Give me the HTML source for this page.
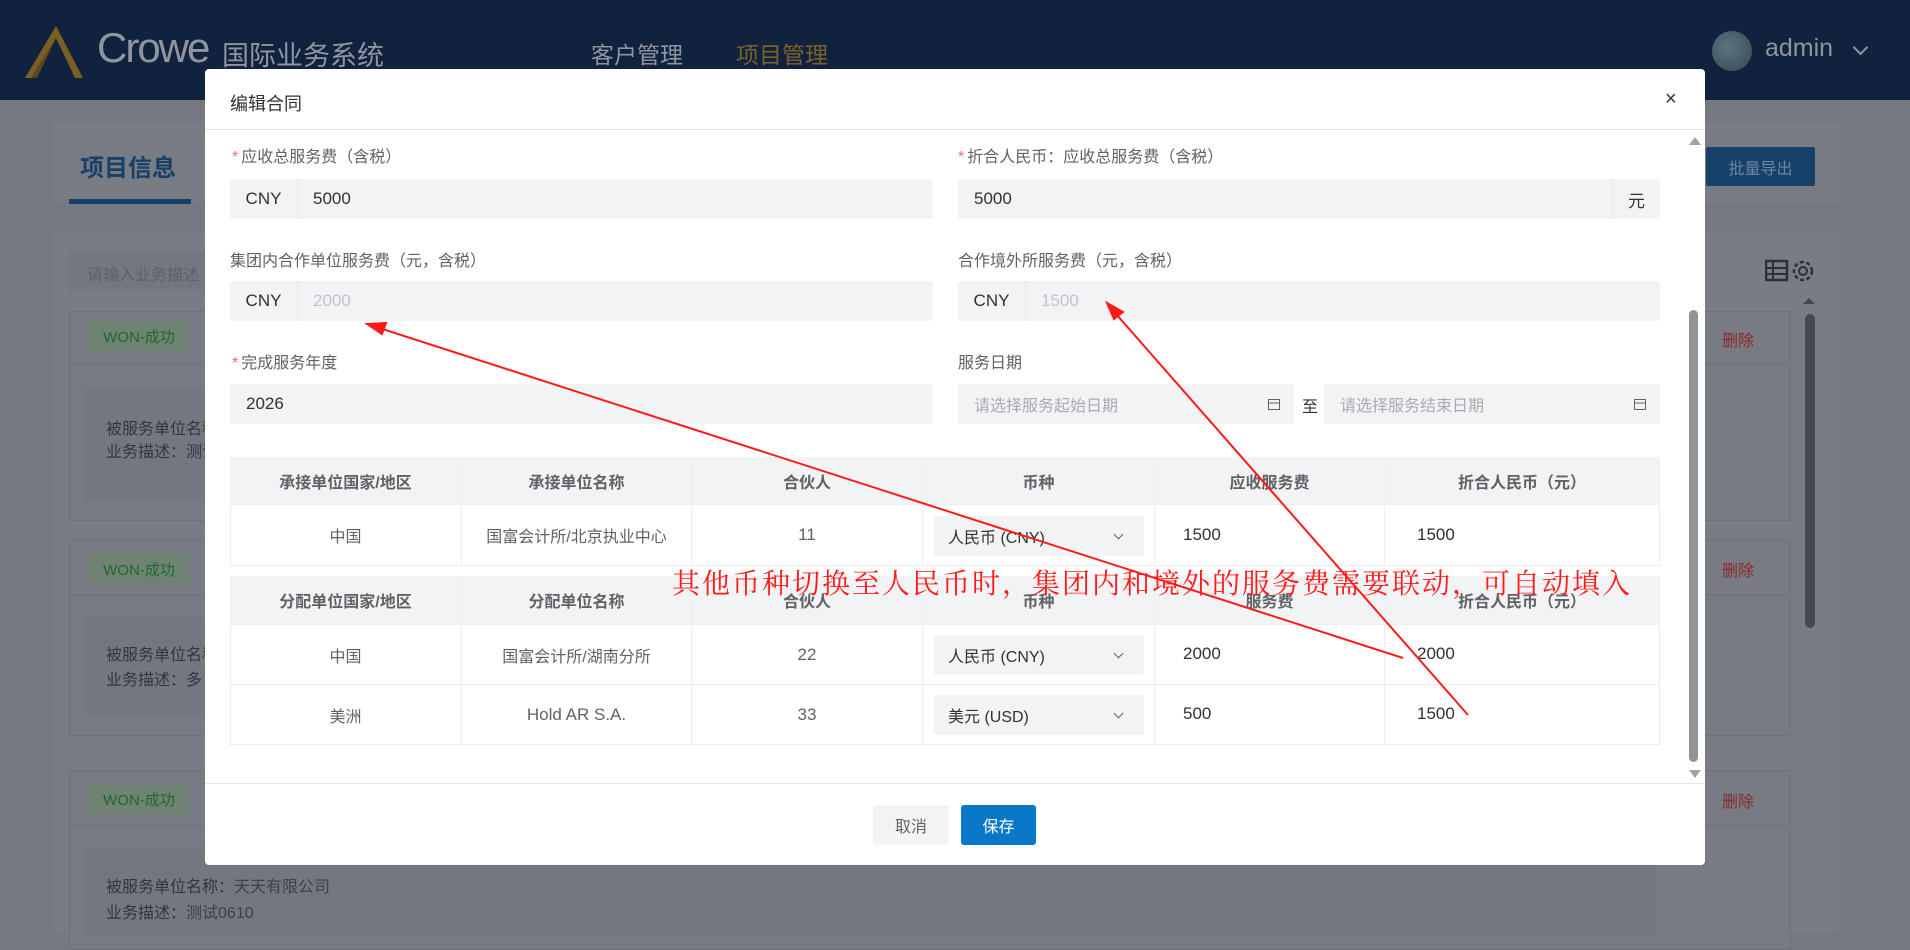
<!DOCTYPE html>
<html><head><meta charset="utf-8">
<style>
*{box-sizing:border-box;margin:0;padding:0}
body{width:1910px;height:933px;overflow:hidden;background:#75787f;font-family:"Liberation Sans","Noto Sans CJK SC",sans-serif;position:relative}
.a{position:absolute}
.hdr{left:0;top:0;width:1910px;height:100px;background:#11223f}
.lbl{font-size:16px;color:#606266}
.lbl b{color:#f56c6c;font-weight:normal;margin-right:3px}
.inp{background:#f2f3f5;border-radius:3px;height:40px;font-size:17px;color:#303133;display:flex;align-items:center}
.pre{width:68px;height:40px;display:flex;align-items:center;justify-content:center;border-right:1px solid #e4e6ea;color:#303133}
.th{background:#f2f3f5;font-weight:bold;color:#606266;font-size:16px}
.cell{position:absolute;display:flex;align-items:center;justify-content:center;font-size:16px;color:#606266;border-right:1px solid #ebeef5;border-bottom:1px solid #ebeef5}
.sel{position:absolute;left:934px;width:210px;height:40px;background:#f2f3f5;border-radius:3px;font-size:16px;color:#303133;display:flex;align-items:center;padding-left:14px}
.sel:after{content:"";position:absolute;right:22px;top:15px;width:6px;height:6px;border-right:1.3px solid #606266;border-bottom:1.3px solid #606266;transform:rotate(45deg)}
.num{position:absolute;font-size:17px;color:#303133}
.card{background:#787b82;border:1px solid #6e7178}
.tag{background:#6f8274;color:#1d6a2a;font-size:15px;display:flex;align-items:center;justify-content:center;border-radius:2px}
.del{color:#8a2a2a;font-size:16px}
.btxt{color:#303640;font-size:16px}
</style></head><body>
<div class="a hdr"></div>
<svg class="a" style="left:25px;top:24px" width="60" height="54" viewBox="0 0 60 54"><path d="M31 2 L58 54 L50 54 L31 14 L8 54 L0 54 Z" fill="#7a5f22"/><path d="M31 14 L12 54 L6 54 Z" fill="#5a4620"/></svg>
<div class="a" style="left:97px;top:24px;font-size:42px;color:#8e959e;letter-spacing:-2px">Crowe</div>
<div class="a" style="left:222px;top:34px;font-size:27px;color:#8e959e">国际业务系统</div>
<div class="a" style="left:591px;top:36px;font-size:23px;color:#8e959e">客户管理</div>
<div class="a" style="left:736px;top:36px;font-size:23px;color:#7a6227">项目管理</div>
<div class="a" style="left:1712px;top:31px;width:40px;height:40px;border-radius:50%;background:radial-gradient(circle at 40% 40%,#5d7580,#33474f)"></div>
<div class="a" style="left:1765px;top:34px;font-size:25px;color:#8e959e">admin</div>
<div class="a" style="left:1855px;top:42px;width:11px;height:11px;border-right:2px solid #8e959e;border-bottom:2px solid #8e959e;transform:rotate(45deg)"></div>

<div class="a" style="left:51px;top:122px;width:1788px;height:80px;background:#797c83"></div>
<div class="a" style="left:80px;top:148px;font-size:24px;font-weight:bold;color:#17406a">项目信息</div>
<div class="a" style="left:69px;top:199px;width:122px;height:5px;background:#14406a"></div>
<div class="a" style="left:1706px;top:147px;width:109px;height:39px;background:#15416b;border-radius:2px;color:#6c86a0;font-size:16px;display:flex;align-items:center;justify-content:center">批量导出</div>
<div class="a" style="left:51px;top:232px;width:1788px;height:701px;background:#797c83"></div>
<div class="a" style="left:69px;top:251px;width:150px;height:39px;background:#74777e;color:#5c6068;font-size:16px;padding:10px 18px">请输入业务描述</div>
<svg class="a" style="left:1765px;top:259px" width="50" height="26"><rect x="1" y="2" width="21" height="19" fill="none" stroke="#2d3038" stroke-width="2.5"/><path d="M1 9h21M1 15h21M8 2v19" stroke="#2d3038" stroke-width="2"/><circle cx="38" cy="12" r="4" fill="none" stroke="#2d3038" stroke-width="2"/><circle cx="38" cy="12" r="9" fill="none" stroke="#2d3038" stroke-width="2.5" stroke-dasharray="4 2.5"/></svg>
<div class="a" style="left:1805px;top:314px;width:10px;height:314px;border-radius:5px;background:#45484e"></div>
<div class="a" style="left:1803px;top:298px;width:0;height:0;border:6px solid transparent;border-bottom-color:#45484e;border-top:0"></div>

<div class="a card" style="left:69px;top:311px;width:1722px;height:210px"></div>
<div class="a" style="left:69px;top:364px;width:1722px;height:1px;background:#6e7178"></div>
<div class="a tag" style="left:89px;top:320px;width:100px;height:32px">WON-成功</div>
<div class="a" style="left:85px;top:387px;width:1570px;height:115px;background:#74777e"></div>
<div class="a btxt" style="left:106px;top:415px">被服务单位名称：</div>
<div class="a btxt" style="left:106px;top:438px">业务描述：测试</div>
<div class="a del" style="left:1722px;top:327px">删除</div>

<div class="a card" style="left:69px;top:540px;width:1722px;height:196px"></div>
<div class="a" style="left:69px;top:594px;width:1722px;height:1px;background:#6e7178"></div>
<div class="a tag" style="left:89px;top:553px;width:100px;height:32px">WON-成功</div>
<div class="a" style="left:85px;top:617px;width:1570px;height:97px;background:#74777e"></div>
<div class="a btxt" style="left:106px;top:641px">被服务单位名称：</div>
<div class="a btxt" style="left:106px;top:666px">业务描述：多</div>
<div class="a del" style="left:1722px;top:557px">删除</div>

<div class="a card" style="left:69px;top:770px;width:1722px;height:180px"></div>
<div class="a" style="left:69px;top:825px;width:1722px;height:1px;background:#6e7178"></div>
<div class="a tag" style="left:89px;top:783px;width:100px;height:32px">WON-成功</div>
<div class="a" style="left:85px;top:847px;width:1570px;height:90px;background:#74777e"></div>
<div class="a btxt" style="left:106px;top:873px">被服务单位名称：<span style="color:#3c4049">天天有限公司</span></div>
<div class="a btxt" style="left:106px;top:899px">业务描述：<span style="color:#3c4049">测试0610</span></div>
<div class="a del" style="left:1722px;top:788px">删除</div>

<div class="a" style="left:205px;top:69px;width:1500px;height:796px;background:#fff;border-radius:4px"></div>
<div class="a" style="left:230px;top:90px;font-size:18px;color:#303133">编辑合同</div>
<div class="a" style="left:1665px;top:88px;font-size:20px;color:#303133">×</div>
<div class="a" style="left:205px;top:129px;width:1500px;height:1px;background:#e4e7ed"></div>
<div class="a" style="left:1689px;top:137px;width:0;height:0;border:6px solid transparent;border-bottom:8px solid #a0a2a6;border-top:0"></div>
<div class="a" style="left:1689px;top:310px;width:9px;height:452px;border-radius:5px;background:#909398"></div>
<div class="a" style="left:1689px;top:770px;width:0;height:0;border:6px solid transparent;border-top:8px solid #a0a2a6;border-bottom:0"></div>

<div class="a lbl" style="left:232px;top:143px"><b>*</b>应收总服务费（含税）</div>
<div class="a inp" style="left:230px;top:179px;width:703px"><div class="pre">CNY</div><span style="margin-left:15px">5000</span></div>
<div class="a lbl" style="left:958px;top:143px"><b>*</b>折合人民币：应收总服务费（含税）</div>
<div class="a inp" style="left:958px;top:179px;width:702px;padding-left:16px">5000<div style="position:absolute;right:0;top:0;width:48px;height:40px;border-left:1px solid #e4e6ea;display:flex;align-items:center;justify-content:center">元</div></div>

<div class="a lbl" style="left:230px;top:247px">集团内合作单位服务费（元，含税）</div>
<div class="a inp" style="left:230px;top:281px;width:703px"><div class="pre">CNY</div><span style="margin-left:15px;color:#c0c4cc">2000</span></div>
<div class="a lbl" style="left:958px;top:247px">合作境外所服务费（元，含税）</div>
<div class="a inp" style="left:958px;top:281px;width:702px"><div class="pre">CNY</div><span style="margin-left:15px;color:#c0c4cc">1500</span></div>

<div class="a lbl" style="left:232px;top:349px"><b>*</b>完成服务年度</div>
<div class="a inp" style="left:230px;top:384px;width:703px;padding-left:16px">2026</div>
<div class="a lbl" style="left:958px;top:349px">服务日期</div>
<div class="a inp" style="left:958px;top:384px;width:336px;padding-left:16px;color:#a8abb2;font-size:16px">请选择服务起始日期<svg style="position:absolute;right:14px;top:14px" width="12" height="12"><rect x="0.5" y="1.5" width="11" height="10" fill="none" stroke="#606266"/><path d="M0.5 5h11" stroke="#606266"/></svg></div>
<div class="a" style="left:1302px;top:393px;font-size:16px;color:#303133">至</div>
<div class="a inp" style="left:1324px;top:384px;width:336px;padding-left:16px;color:#a8abb2;font-size:16px">请选择服务结束日期<svg style="position:absolute;right:14px;top:14px" width="12" height="12"><rect x="0.5" y="1.5" width="11" height="10" fill="none" stroke="#606266"/><path d="M0.5 5h11" stroke="#606266"/></svg></div>

<div class="cell th" style="left:230px;top:457px;width:232px;height:48px">承接单位国家/地区</div>
<div class="cell th" style="left:462px;top:457px;width:230px;height:48px">承接单位名称</div>
<div class="cell th" style="left:692px;top:457px;width:231px;height:48px">合伙人</div>
<div class="cell th" style="left:923px;top:457px;width:232px;height:48px">币种</div>
<div class="cell th" style="left:1155px;top:457px;width:230px;height:48px">应收服务费</div>
<div class="cell th" style="left:1385px;top:457px;width:275px;height:48px">折合人民币（元）</div>
<div class="cell" style="left:230px;top:505px;width:232px;height:61px">中国</div>
<div class="cell" style="left:462px;top:505px;width:230px;height:61px">国富会计所/北京执业中心</div>
<div class="cell" style="left:692px;top:505px;width:231px;height:61px;font-size:17px">11</div>
<div class="cell" style="left:923px;top:505px;width:232px;height:61px"></div>
<div class="cell" style="left:1155px;top:505px;width:230px;height:61px"></div>
<div class="cell" style="left:1385px;top:505px;width:275px;height:61px"></div>
<div class="sel" style="top:516px">人民币 (CNY)</div>
<div class="num" style="left:1183px;top:525px">1500</div>
<div class="num" style="left:1417px;top:525px">1500</div>

<div class="cell th" style="left:230px;top:576px;width:232px;height:49px">分配单位国家/地区</div>
<div class="cell th" style="left:462px;top:576px;width:230px;height:49px">分配单位名称</div>
<div class="cell th" style="left:692px;top:576px;width:231px;height:49px">合伙人</div>
<div class="cell th" style="left:923px;top:576px;width:232px;height:49px">币种</div>
<div class="cell th" style="left:1155px;top:576px;width:230px;height:49px">服务费</div>
<div class="cell th" style="left:1385px;top:576px;width:275px;height:49px">折合人民币（元）</div>
<div class="cell" style="left:230px;top:625px;width:232px;height:60px">中国</div>
<div class="cell" style="left:462px;top:625px;width:230px;height:60px">国富会计所/湖南分所</div>
<div class="cell" style="left:692px;top:625px;width:231px;height:60px;font-size:17px">22</div>
<div class="cell" style="left:923px;top:625px;width:232px;height:60px"></div>
<div class="cell" style="left:1155px;top:625px;width:230px;height:60px"></div>
<div class="cell" style="left:1385px;top:625px;width:275px;height:60px"></div>
<div class="cell" style="left:230px;top:685px;width:232px;height:60px">美洲</div>
<div class="cell" style="left:462px;top:685px;width:230px;height:60px;font-size:17px">Hold AR S.A.</div>
<div class="cell" style="left:692px;top:685px;width:231px;height:60px;font-size:17px">33</div>
<div class="cell" style="left:923px;top:685px;width:232px;height:60px"></div>
<div class="cell" style="left:1155px;top:685px;width:230px;height:60px"></div>
<div class="cell" style="left:1385px;top:685px;width:275px;height:60px"></div>
<div class="a" style="left:230px;top:576px;width:1px;height:169px;background:#ebeef5"></div>
<div class="a" style="left:230px;top:505px;width:1px;height:61px;background:#ebeef5"></div>
<div class="sel" style="top:635px">人民币 (CNY)</div>
<div class="num" style="left:1183px;top:644px">2000</div>
<div class="num" style="left:1417px;top:644px">2000</div>
<div class="sel" style="top:695px">美元 (USD)</div>
<div class="num" style="left:1183px;top:704px">500</div>
<div class="num" style="left:1417px;top:704px">1500</div>

<div class="a" style="left:205px;top:783px;width:1500px;height:1px;background:#e4e7ed"></div>
<div class="a" style="left:873px;top:805px;width:76px;height:40px;background:#f2f3f5;border-radius:3px;font-size:16px;color:#606266;display:flex;align-items:center;justify-content:center">取消</div>
<div class="a" style="left:961px;top:805px;width:75px;height:40px;background:#0a78c8;border-radius:3px;font-size:16px;color:#fff;display:flex;align-items:center;justify-content:center">保存</div>

<div class="a" style="left:672px;top:562px;font-size:28px;color:#ff1a1a;font-family:'Noto Serif CJK SC','Noto Sans CJK SC',serif;white-space:nowrap;letter-spacing:2px">其他币种切换至人民币时，集团内和境外的服务费需要联动，可自动填入</div>
<svg class="a" style="left:0;top:0" width="1910" height="933">
<line x1="1403" y1="658" x2="370" y2="325" stroke="#ff1a1a" stroke-width="2"/>
<path d="M367 324 L386 323 L382 334 Z" fill="#ff1a1a" stroke="#ff1a1a" stroke-width="2"/>
<line x1="1468" y1="715" x2="1109" y2="306" stroke="#ff1a1a" stroke-width="2"/>
<path d="M1107 303 L1123 312 L1114 319 Z" fill="#ff1a1a" stroke="#ff1a1a" stroke-width="2"/>
</svg>
</body></html>
